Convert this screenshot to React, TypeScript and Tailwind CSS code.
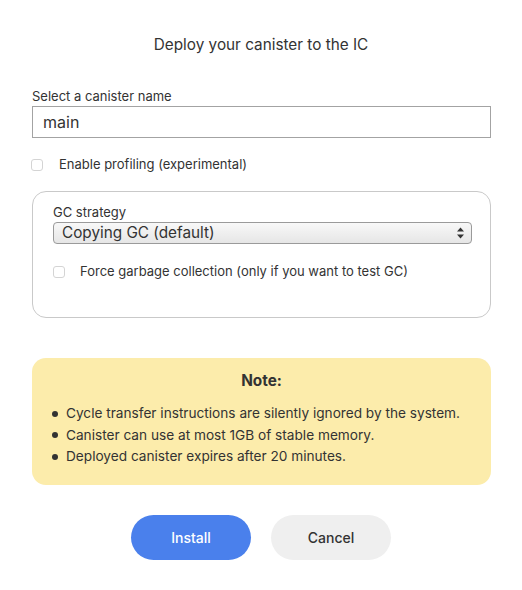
import React from "react";

function Check() {
  return <span className="block w-[12px] h-[12px] rounded-[3px] border border-[#d4d4d4] bg-white shrink-0" />;
}

export default function App() {
  return (
    <div className="w-[522px] h-[590px] bg-white text-[#333] font-['Inter','Liberation_Sans',sans-serif] px-[32px] pt-[35px]">
      <h1 className="text-center text-[15.3px] leading-[20px] font-normal">Deploy your canister to the IC</h1>
      <div className="mt-[33px] text-[13px] leading-[16px]">Select a canister name</div>
      <div className="mt-[2px] w-[459px] h-[32px] border border-[#a3a3a3] flex items-center px-[10px] text-[16px]">main</div>
      <div className="mt-[21px] flex items-center h-[12px] text-[13px]">
        <span className="ml-[-1px]"><Check /></span>
        <span className="ml-[16px]">Enable profiling (experimental)</span>
      </div>
      <div className="mt-[20px] w-[459px] h-[127px] rounded-[14px] border border-[#c9c9c9] px-[20px] pt-[12px]">
        <div className="text-[13px] leading-[16px]">GC strategy</div>
        <div className="mt-[2px] h-[22px] w-[419px] rounded-[4px] border border-[#9a9a9a] bg-gradient-to-b from-[#f8f8f8] to-[#e6e6e6] flex items-center pl-[8px] pr-[6px] text-[15.3px]">
          <span className="flex-1">Copying GC (default)</span>
          <svg width="9" height="14" viewBox="0 0 9 14">
            <path d="M4.5 1.5 L8 5.5 H1 Z" fill="#333" />
            <path d="M4.5 12.5 L8 8.5 H1 Z" fill="#333" />
          </svg>
        </div>
        <div className="mt-[22px] flex items-center h-[12px] text-[13px]">
          <Check />
          <span className="ml-[15px]">Force garbage collection (only if you want to test GC)</span>
        </div>
      </div>
      <div className="mt-[40px] w-[459px] h-[127px] rounded-[14px] bg-[#fcecab] pt-[13px] px-[20px]">
        <div className="text-center text-[15.3px] leading-[20px] font-bold">Note:</div>
        <ul className="mt-[12px] text-[13.65px] leading-[21.5px]">
          {[
            "Cycle transfer instructions are silently ignored by the system.",
            "Canister can use at most 1GB of stable memory.",
            "Deployed canister expires after 20 minutes.",
          ].map((t) => (
            <li key={t} className="flex items-center">
              <span className="w-[6px] h-[6px] rounded-full bg-[#333] mr-[8px] shrink-0" />
              <span>{t}</span>
            </li>
          ))}
        </ul>
      </div>
      <div className="mt-[30px] flex justify-center gap-[20px]">
        <button className="w-[120px] h-[45px] rounded-full bg-[#4a80ec] text-white text-[14px] font-medium">Install</button>
        <button className="w-[120px] h-[45px] rounded-full bg-[#efefef] text-[#333] text-[14px] font-medium">Cancel</button>
      </div>
    </div>
  );
}
